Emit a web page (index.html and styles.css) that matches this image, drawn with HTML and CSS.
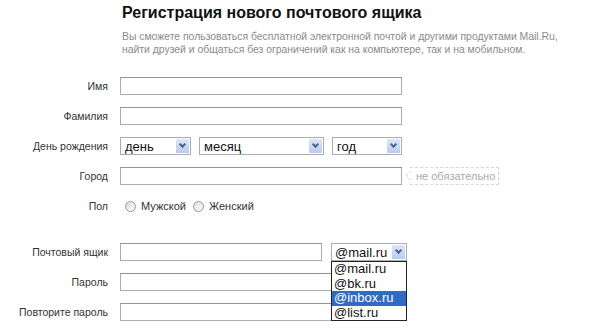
FILE: index.html
```html
<!DOCTYPE html>
<html>

    <head>
        <!-- Meta Data -->
        <meta charset="UTF-8">

        <!-- Title -->
        <title>Регистрация нового почтового ящика</title>

        <!-- Style -->
        <link rel="stylesheet" href="styles.css">
    </head>

    <body>
        <!-- Header -->
        <div class="head">
            <h1>Регистрация нового почтового ящика</h1>
            <p>Вы сможете пользоваться бесплатной электронной почтой и другими продуктами Mail.Ru,<br>
            найти друзей и общаться без ограничений как на компьютере, так и на мобильном.</p>
        </div>

        <!-- Form -->
        <div class="form">
            <div class="row">
                <div class="label">Имя</div>
                <div class="field wide"></div>
            </div>
            <div class="row">
                <div class="label">Фамилия</div>
                <div class="field wide"></div>
            </div>
            <div class="row">
                <div class="label">День рождения</div>
                <div class="select day"><span>день</span><i class="arrow"></i></div>
                <div class="select month"><span>месяц</span><i class="arrow"></i></div>
                <div class="select year"><span>год</span><i class="arrow"></i></div>
            </div>
            <div class="row">
                <div class="label">Город</div>
                <div class="field wide"></div>
                <div class="hint">не обязательно</div>
            </div>
            <div class="row">
                <div class="label">Пол</div>
                <div class="radios">
                    <i class="radio"></i><span>Мужской</span>
                    <i class="radio"></i><span>Женский</span>
                </div>
            </div>

            <div class="row section">
                <div class="label">Почтовый ящик</div>
                <div class="field mailbox"></div>
                <div class="domain">
                    <div class="select domain-select"><span>@mail.ru</span><i class="arrow"></i></div>
                    <ul class="options">
                        <li>@mail.ru</li>
                        <li>@bk.ru</li>
                        <li class="active">@inbox.ru</li>
                        <li>@list.ru</li>
                    </ul>
                </div>
            </div>
            <div class="row">
                <div class="label">Пароль</div>
                <div class="field wide"></div>
            </div>
            <div class="row">
                <div class="label">Повторите пароль</div>
                <div class="field wide"></div>
            </div>
        </div>
    </body>

</html>
```

FILE: styles.css
```css
html {
    background-color: #fff;
    color: #333;
    font-family: "Liberation Sans", Arial, sans-serif;
}

body {
    margin: 0;
}

.head {
    padding: 2px 0 0 122px;
}

h1 {
    margin: 0;
    font-size: 16px;
    line-height: 21px;
    color: #111;
}

.head p {
    margin: 7px 0 0;
    font-size: 10.4px;
    line-height: 13px;
    color: #8a8a8a;
}

.form {
    margin-top: 21px;
}

.row {
    display: flex;
    align-items: center;
    gap: 12px;
    height: 18px;
    margin-bottom: 12px;
}

.row.section {
    margin-top: 28px;
}

.label {
    width: 108px;
    text-align: right;
    font-size: 10.5px;
    color: #333;
}

.field {
    box-sizing: border-box;
    height: 18px;
    border: 1px solid #a9adb2;
    border-top-color: #8f949a;
    background: #fff;
}

.wide {
    width: 282px;
}

.mailbox {
    width: 202px;
    margin-right: -3px;
}

.select {
    box-sizing: border-box;
    display: flex;
    align-items: center;
    justify-content: space-between;
    height: 18px;
    padding: 0 1px 0 4px;
    border: 1px solid #a9adb2;
    background: #fff;
    font-size: 13px;
    color: #111;
}

.day {
    width: 71px;
}

.month {
    width: 125px;
    margin-left: -4px;
}

.year {
    width: 70px;
    margin-left: -4px;
}

.arrow {
    position: relative;
    width: 13px;
    height: 14px;
    background: linear-gradient(#dbe6f8, #b9cbef);
    border-radius: 1px;
}

.arrow::after {
    content: "";
    position: absolute;
    left: 4px;
    top: 3px;
    width: 3px;
    height: 3px;
    border-right: 2px solid #4d6185;
    border-bottom: 2px solid #4d6185;
    transform: rotate(45deg);
}

.hint {
    position: relative;
    margin-left: -4px;
    padding: 0 3px 0 6px;
    height: 16px;
    line-height: 16px;
    border: 1px dashed #d6d6d6;
    border-left: none;
    font-size: 11px;
    color: #aaa;
}

.hint::before {
    content: "";
    position: absolute;
    left: -3px;
    top: 4px;
    width: 6px;
    height: 6px;
    border-left: 1px dashed #d6d6d6;
    border-bottom: 1px dashed #d6d6d6;
    transform: rotate(45deg);
}

.radios {
    display: flex;
    align-items: center;
    font-size: 11px;
    color: #333;
}

.radio {
    box-sizing: border-box;
    width: 11px;
    height: 11px;
    margin: 0 5px 0 5px;
    border: 1px solid #8f9aa8;
    border-radius: 50%;
    background: linear-gradient(135deg, #d8dde3, #fff);
}

.radios span + .radio {
    margin-left: 7px;
}

.domain {
    position: relative;
}

.domain-select {
    width: 76px;
    padding-left: 3px;
}

.options {
    position: absolute;
    left: 0;
    top: 18px;
    width: 76px;
    box-sizing: border-box;
    margin: 0;
    padding: 0;
    list-style: none;
    border: 1px solid #222;
    background: #fff;
    font-size: 13px;
    line-height: 14.5px;
    color: #111;
}

.options li {
    padding-left: 2px;
}

.options .active {
    background: #316ac5;
    color: #fff;
}
```
